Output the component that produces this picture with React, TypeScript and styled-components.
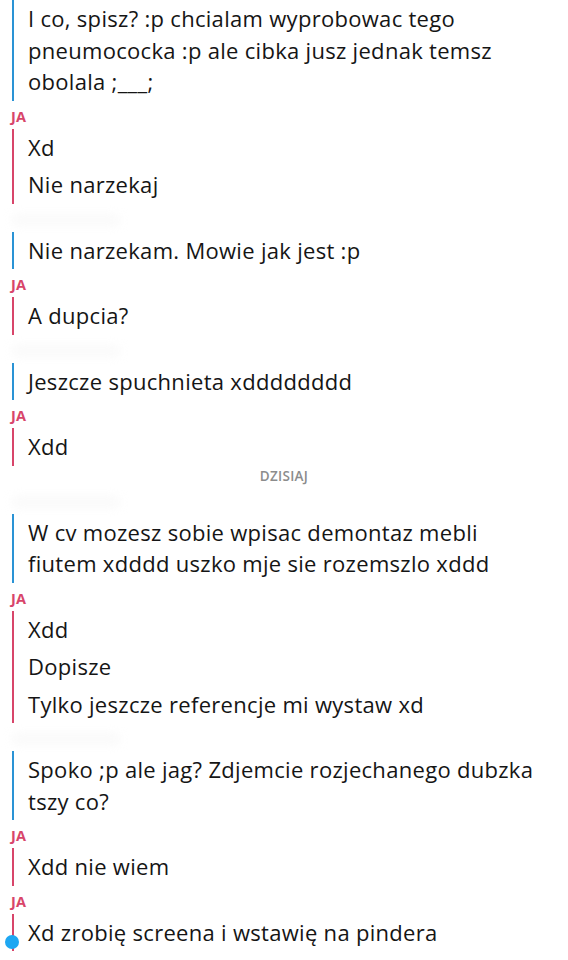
import * as React from 'react'
import styled, { createGlobalStyle } from 'styled-components'

const colors = {
  me: '#d8456a',
  friend: '#2a93d5',
  dot: '#1ea7f2',
  text: '#151515',
  date: '#8c8c8c',
}

const GlobalStyle = createGlobalStyle`
  html, body {
    margin: 0;
    padding: 0;
    background: #ffffff;
  }
  body {
    font-family: "Open Sans", "Noto Sans", "DejaVu Sans", sans-serif;
    color: ${colors.text};
  }
`

const ChatList = styled.div`
  width: 568px;
  display: flex;
  flex-direction: column;
  overflow: hidden;
`

const SenderRow = styled.div`
  height: 28px;
  display: flex;
  align-items: flex-end;
  padding-left: 11px;
  padding-bottom: 4px;
  box-sizing: border-box;
`

const SenderName = styled.span`
  font-size: 14.5px;
  line-height: 16px;
  font-weight: 700;
  letter-spacing: 0.3px;
  color: ${colors.me};
`

// friend name is blurred out in the screenshot
const BlurredName = styled.span`
  display: block;
  width: 110px;
  height: 12px;
  margin-bottom: 2px;
  border-radius: 6px;
  background: #fafafa;
  filter: blur(5px);
`

const Block = styled.div<{ $mine: boolean }>`
  position: relative;
  margin-left: 12px;
  border-left: 2px solid ${(p) => (p.$mine ? colors.me : colors.friend)};
  padding-left: 14px;
  padding-right: 16px;
  display: flex;
  flex-direction: column;
`

// line breaks kept as in the screenshot
const Message = styled.div`
  padding: 3px 0;
  font-size: 22px;
  line-height: 31.5px;
  letter-spacing: 0.3px;
  white-space: pre-line;
`

const DateRow = styled.div`
  height: 20px;
  display: flex;
  align-items: center;
  justify-content: center;
  font-size: 13.5px;
  font-weight: 600;
  letter-spacing: 0.3px;
  color: ${colors.date};
`

const ReadDot = styled.span`
  position: absolute;
  left: -9px;
  bottom: 2px;
  width: 14px;
  height: 14px;
  border-radius: 50%;
  background: ${colors.dot};
`

type Group = {
  mine: boolean
  messages: string[]
  date?: string
  dot?: boolean
}

const groups: Group[] = [
  { mine: false, messages: ['I co, spisz? :p chcialam wyprobowac tego\npneumococka :p ale cibka jusz jednak temsz\nobolala ;___;'] },
  { mine: true, messages: ['Xd', 'Nie narzekaj'] },
  { mine: false, messages: ['Nie narzekam. Mowie jak jest :p'] },
  { mine: true, messages: ['A dupcia?'] },
  { mine: false, messages: ['Jeszcze spuchnieta xdddddddd'] },
  { mine: true, messages: ['Xdd'] },
  { mine: false, date: 'DZISIAJ', messages: ['W cv mozesz sobie wpisac demontaz mebli\nfiutem xdddd uszko mje sie rozemszlo xddd'] },
  { mine: true, messages: ['Xdd', 'Dopisze', 'Tylko jeszcze referencje mi wystaw xd'] },
  { mine: false, messages: ['Spoko ;p ale jag? Zdjemcie rozjechanego dubzka\ntszy co?'] },
  { mine: true, messages: ['Xdd nie wiem'] },
  { mine: true, messages: ['Xd zrobię screena i wstawię na pindera'], dot: true },
]

export default function App() {
  return (
    <ChatList>
      <GlobalStyle />
      {groups.map((g, i) => (
        <React.Fragment key={i}>
          {g.date && <DateRow>{g.date}</DateRow>}
          {i > 0 && (
            <SenderRow>{g.mine ? <SenderName>JA</SenderName> : <BlurredName />}</SenderRow>
          )}
          <Block $mine={g.mine}>
            {g.messages.map((m, j) => (
              <Message key={j}>{m}</Message>
            ))}
            {g.dot && <ReadDot />}
          </Block>
        </React.Fragment>
      ))}
    </ChatList>
  )
}
